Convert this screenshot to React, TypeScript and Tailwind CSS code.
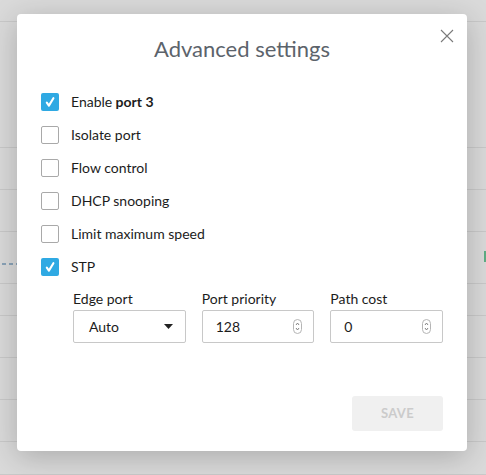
import { useState } from 'react'

const font = { fontFamily: 'Lato, "Open Sans", sans-serif' }

const rows = [
  { key: 'enable', label: 'Enable', bold: 'port 3', checked: true },
  { key: 'isolate', label: 'Isolate port', checked: false },
  { key: 'flow', label: 'Flow control', checked: false },
  { key: 'dhcp', label: 'DHCP snooping', checked: false },
  { key: 'limit', label: 'Limit maximum speed', checked: false },
  { key: 'stp', label: 'STP', checked: true },
]

// heights of the table rows behind the backdrop
const bgRows = [22, 126, 42, 42, 52, 32, 42, 42, 42, 33]

function Check({ on, onToggle }: { on: boolean; onToggle: () => void }) {
  return (
    <button
      onClick={onToggle}
      className={`w-[18px] h-[18px] rounded-[2px] flex items-center justify-center shrink-0 ${
        on ? 'bg-[#2fa9e3]' : 'bg-white border border-[#a9a9a9]'
      }`}
    >
      {on && (
        <svg width="12" height="12" viewBox="0 0 12 12">
          <path d="M2.8 6.6 L4.9 9.6 L9.4 2.2" fill="none" stroke="white" strokeWidth="2.1" strokeLinecap="round" strokeLinejoin="round" />
        </svg>
      )}
    </button>
  )
}

function Spinner() {
  return (
    <svg width="9" height="15" viewBox="0 0 9 15" className="shrink-0">
      <rect x="0.5" y="0.5" width="8" height="14" rx="4" fill="white" stroke="#b5b5b5" />
      <path d="M3 6 L4.5 4 L6 6" fill="none" stroke="#777" strokeWidth="0.9" />
      <path d="M3 9 L4.5 11 L6 9" fill="none" stroke="#777" strokeWidth="0.9" />
    </svg>
  )
}

export default function App() {
  const [checks, setChecks] = useState<Record<string, boolean>>(
    Object.fromEntries(rows.map(r => [r.key, r.checked]))
  )

  return (
    <div className="relative w-[486px] h-[475px] overflow-hidden bg-[#dadada]" style={font}>
      <div className="flex flex-col">
        {bgRows.map((h, i) => (
          <div key={i} className="border-b border-[#c9c9c9]" style={{ height: h }} />
        ))}
      </div>
      <div className="absolute left-[2px] top-[263px] flex gap-[3px]">
        <div className="w-[4px] h-[2px] bg-[#8aa3b8]" />
        <div className="w-[4px] h-[2px] bg-[#8aa3b8]" />
        <div className="w-[4px] h-[2px] bg-[#8aa3b8]" />
      </div>
      <div className="absolute right-0 top-[251px] w-[2px] h-[11px] bg-[#5fae85]" />

      <div className="absolute left-[17px] top-[14px] w-[450px] h-[437px] bg-white rounded-[4px] shadow-[0_6px_30px_rgba(0,0,0,0.22)] px-6 pt-[21px] flex flex-col">
        <button className="absolute right-[13px] top-[15px] flex">
          <svg width="14" height="14" viewBox="0 0 14 14">
            <path d="M1 1 L13 13 M13 1 L1 13" stroke="#7a7a7a" strokeWidth="1.1" />
          </svg>
        </button>
        <h2 className="text-center text-[22px] leading-[28px] h-[28px] text-[#5c636b]">Advanced settings</h2>

        <div className="mt-[22px] flex flex-col">
          {rows.map(r => (
            <div key={r.key} className="h-[33px] flex items-center gap-3">
              <Check on={checks[r.key]} onToggle={() => setChecks(c => ({ ...c, [r.key]: !c[r.key] }))} />
              <span className="text-[14px] text-[#1c1c1c]">
                {r.label}
                {r.bold && <b className="font-bold"> {r.bold}</b>}
              </span>
            </div>
          ))}
        </div>

        <div className="ml-8 mt-[7px] grid grid-cols-3 gap-4">
          {[
            { label: 'Edge port', value: 'Auto', select: true },
            { label: 'Port priority', value: '128' },
            { label: 'Path cost', value: '0' },
          ].map(f => (
            <div key={f.label} className="flex flex-col">
              <span className="text-[14px] leading-[17px] text-[#1c1c1c] mb-[3px]">{f.label}</span>
              <div className="h-[33px] border border-[#c8c8c8] rounded-[2px] flex items-center justify-between pl-[13px] pr-[11px] text-[14px] text-[#1c1c1c]">
                <span className={f.select ? 'pl-[2px]' : ''}>{f.value}</span>
                {f.select ? (
                  <svg width="9" height="5" viewBox="0 0 9 5" className="mr-[1px]">
                    <path d="M0 0 L9 0 L4.5 5 Z" fill="#222" />
                  </svg>
                ) : (
                  <Spinner />
                )}
              </div>
            </div>
          ))}
        </div>

        <div className="mt-auto mb-5 flex justify-end">
          <button className="w-[91px] h-[35px] rounded-[3px] bg-[#f0f0f0] text-[#cbcbcb] text-[13px] font-bold tracking-wide">
            SAVE
          </button>
        </div>
      </div>
    </div>
  )
}
